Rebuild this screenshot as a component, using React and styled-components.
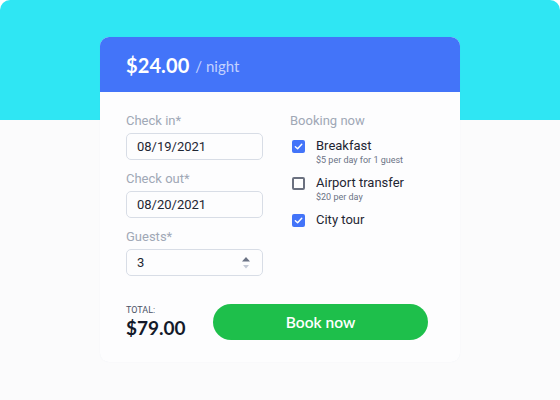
import React, { useState } from 'react';
import styled, { createGlobalStyle } from 'styled-components';

const GlobalStyle = createGlobalStyle`
  html, body {
    margin: 0;
    padding: 0;
    background: #ffffff;
  }
  * {
    box-sizing: border-box;
  }
`;

const Stage = styled.div`
  width: 560px;
  height: 400px;
  border-radius: 10px 10px 0 0;
  background: linear-gradient(to bottom, #2fe6f3 0, #2fe6f3 120px, #fbfbfc 120px);
  padding-top: 37px;
  overflow: hidden;
`;

const Card = styled.div`
  width: 360px;
  margin: 0 auto;
  border-radius: 9px;
  background: #fdfdfe;
  box-shadow: 0 0 1px rgba(120, 150, 190, 0.12);
  overflow: hidden;
`;

const CardHeader = styled.div`
  height: 55px;
  background: #4374f9;
  display: flex;
  align-items: center;
  padding: 0 26px;
  font-family: Lato, 'Open Sans', sans-serif;
  color: #ffffff;
`;

const Price = styled.span`
  font-size: 20px;
  font-weight: 700;
  letter-spacing: 0.1px;
`;

const PerNight = styled.span`
  font-size: 15px;
  font-weight: 400;
  color: #c3d2ff;
  margin-left: 6px;
  margin-top: 3px;
`;

const Body = styled.div`
  padding: 20px 26px 22px;
  font-family: Roboto, 'Liberation Sans', sans-serif;
`;

const Columns = styled.div`
  display: grid;
  grid-template-columns: 137px 1fr;
  column-gap: 27px;
`;

const Column = styled.div`
  display: flex;
  flex-direction: column;
`;

const Label = styled.div`
  font-size: 13px;
  line-height: 17px;
  color: #a0a8b6;
  margin-top: ${(p) => (p.$first ? 0 : 10)}px;
  margin-bottom: ${(p) => (p.$gap ? p.$gap : 4)}px;
`;

const Field = styled.div`
  height: 27px;
  border: 1px solid #d8dde6;
  border-radius: 5px;
  display: flex;
  align-items: center;
  padding: 0 10px;
  font-size: 13px;
  color: #1f2633;
`;

const FieldValue = styled.span`
  flex: 1;
`;

const Spinner = styled.svg`
  width: 10px;
  height: 16px;
  margin-right: 1px;
`;

const Options = styled.div`
  display: flex;
  flex-direction: column;
  gap: 9px;
`;

const Option = styled.label`
  display: grid;
  grid-template-columns: 13px 1fr;
  column-gap: 11px;
  align-items: start;
  padding-left: 2px;
  cursor: pointer;
`;

const Box = styled.span`
  width: 13px;
  height: 13px;
  margin-top: 2px;
  border-radius: 2px;
  display: flex;
  align-items: center;
  justify-content: center;
  background: ${(p) => (p.$checked ? '#4374f9' : '#ffffff')};
  border: ${(p) => (p.$checked ? 'none' : '2px solid #6b7180')};
`;

const OptionText = styled.div`
  display: flex;
  flex-direction: column;
`;

const OptionTitle = styled.span`
  font-size: 13px;
  line-height: 16px;
  color: #1f2633;
`;

const OptionSub = styled.span`
  font-size: 9px;
  line-height: 12px;
  color: #6b7385;
`;

const Footer = styled.div`
  display: flex;
  align-items: center;
  margin-top: 28px;
  font-family: Lato, 'Open Sans', sans-serif;
`;

const Total = styled.div`
  width: 87px;
  display: flex;
  flex-direction: column;
`;

const TotalLabel = styled.span`
  font-size: 9px;
  line-height: 11px;
  color: #4b5366;
  font-family: Roboto, 'Liberation Sans', sans-serif;
`;

const TotalValue = styled.span`
  font-size: 19px;
  line-height: 23px;
  font-weight: 700;
  color: #141a2a;
`;

const BookButton = styled.button`
  width: 215px;
  height: 36px;
  border: none;
  border-radius: 18px;
  background: #1ebf4b;
  color: #ffffff;
  font-family: Lato, 'Open Sans', sans-serif;
  font-size: 15.5px;
  font-weight: 600;
  cursor: pointer;
`;

function CheckIcon() {
  return (
    <svg width="9" height="9" viewBox="0 0 10 10">
      <path d="M1.5 5.2 L4 7.5 L8.6 2.4" fill="none" stroke="#ffffff" strokeWidth="1.6" strokeLinecap="round" strokeLinejoin="round" />
    </svg>
  );
}

const extras = [
  { id: 'breakfast', title: 'Breakfast', sub: '$5 per day for 1 guest', checked: true },
  { id: 'airport', title: 'Airport transfer', sub: '$20 per day', checked: false },
  { id: 'tour', title: 'City tour', checked: true },
];

export default function App() {
  const [selected, setSelected] = useState(
    extras.reduce((acc, e) => ({ ...acc, [e.id]: e.checked }), {})
  );

  return (
    <>
      <GlobalStyle />
      <Stage>
        <Card>
          <CardHeader>
            <Price>$24.00</Price>
            <PerNight>/ night</PerNight>
          </CardHeader>
          <Body>
            <Columns>
              <Column>
                <Label $first>Check in*</Label>
                <Field>
                  <FieldValue>08/19/2021</FieldValue>
                </Field>
                <Label>Check out*</Label>
                <Field>
                  <FieldValue>08/20/2021</FieldValue>
                </Field>
                <Label>Guests*</Label>
                <Field>
                  <FieldValue>3</FieldValue>
                  <Spinner viewBox="0 0 10 16">
                    <path d="M1 6.5 L5 2 L9 6.5 Z" fill="#6b7385" />
                    <path d="M2 10 L5 13.5 L8 10 Z" fill="#c4cad6" />
                  </Spinner>
                </Field>
              </Column>
              <Column>
                <Label $first $gap={9}>Booking now</Label>
                <Options>
                  {extras.map((e) => (
                    <Option
                      key={e.id}
                      onClick={() => setSelected({ ...selected, [e.id]: !selected[e.id] })}
                    >
                      <Box $checked={selected[e.id]}>{selected[e.id] && <CheckIcon />}</Box>
                      <OptionText>
                        <OptionTitle>{e.title}</OptionTitle>
                        {e.sub && <OptionSub>{e.sub}</OptionSub>}
                      </OptionText>
                    </Option>
                  ))}
                </Options>
              </Column>
            </Columns>
            <Footer>
              <Total>
                <TotalLabel>TOTAL:</TotalLabel>
                <TotalValue>$79.00</TotalValue>
              </Total>
              <BookButton>Book now</BookButton>
            </Footer>
          </Body>
        </Card>
      </Stage>
    </>
  );
}
